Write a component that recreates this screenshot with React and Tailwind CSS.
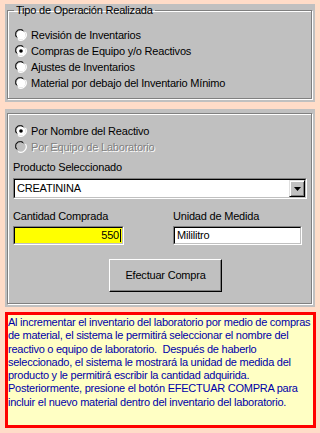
import React from 'react';

const lines = [
    'Al incrementar el inventario del laboratorio por medio de compras',
    'de material, el sistema le permitirá seleccionar el nombre del',
    'reactivo o equipo de laboratorio.\u00a0 Después de haberlo',
    'seleccionado, el sistema le mostrará la unidad de medida del',
    'producto y le permitirá escribir la cantidad adquirida.',
    'Posteriormente, presione el botón EFECTUAR COMPRA para',
    'incluir el nuevo material dentro del inventario del laboratorio.',
];

const Radio = ({ checked, disabled }) => (
    <svg width="12" height="12" viewBox="0 0 12 12" className="shrink-0">
        <path d="M1 8 A5 5 0 0 1 8 1" fill="none" stroke="#808080" strokeWidth="1" />
        <circle cx="6" cy="6" r="4.5" fill={disabled ? '#c0c0c0' : '#fff'} />
        <path d="M2 8.5 A4 4 0 0 1 8.5 2" fill="none" stroke="#000" strokeWidth="1" />
        <path d="M3 10.5 A5.5 5.5 0 0 0 10.5 3" fill="none" stroke="#fff" strokeWidth="1.2" />
        {checked && <circle cx="6" cy="6" r="1.8" fill="#000" />}
    </svg>
);

const RadioRow = ({ label, checked, disabled }) => (
    <div className="h-[16px] flex items-center gap-[4px] pl-[7px]">
        <Radio checked={checked} disabled={disabled} />
        <span
            className={disabled ? 'text-[#808080] [text-shadow:1px_1px_0_#fff]' : 'text-black'}
        >
            {label}
        </span>
    </div>
);

const sunken = 'border border-t-[#808080] border-l-[#808080] border-r-white border-b-white';
const sunkenInner = 'border border-t-black border-l-black border-r-[#c0c0c0] border-b-[#c0c0c0]';
const etched = 'border border-[#808080] shadow-[inset_1px_1px_0_#fff,1px_1px_0_#fff]';

const App = () => {
    return (
        <div className="w-[320px] h-[433px] bg-[#FFDCC8] px-[5px] pt-[4px] font-['Liberation_Sans',Arial,sans-serif] text-[11px] leading-[13px] tracking-[-0.2px] text-black overflow-hidden">
            <div className="bg-[#c0c0c0] h-[98px] pr-[3px] pl-[2px]">
                <fieldset className={`${etched} h-[95px] min-w-0`}>
                    <legend className="ml-[6px] px-[2px] leading-[13px]">Tipo de Operación Realizada</legend>
                    <div className="pt-[10px]">
                        <RadioRow label="Revisión de Inventarios" />
                        <RadioRow label="Compras de Equipo y/o Reactivos" checked />
                        <RadioRow label="Ajustes de Inventarios" />
                        <RadioRow label="Material por debajo del Inventario Mínimo" />
                    </div>
                </fieldset>
            </div>

            <div className="bg-[#c0c0c0] h-[198px] mt-[7px] pt-[4px] pr-[3px] pl-[2px]">
                <div className={`${etched} h-[191px] pt-[9px]`}>
                    <RadioRow label="Por Nombre del Reactivo" checked />
                    <RadioRow label="Por Equipo de Laboratorio" disabled />

                    <div className="ml-[5px] mt-[6px]">Producto Seleccionado</div>
                    <div className={`${sunken} ml-[5px] mr-[4px] mt-[4px] h-[21px]`}>
                        <div className={`${sunkenInner} h-full bg-white flex items-center justify-between`}>
                            <span className="pl-[2px]">CREATININA</span>
                            <div className="w-[16px] h-[17px] bg-[#c0c0c0] border border-t-[#dfdfdf] border-l-[#dfdfdf] border-r-black border-b-black shadow-[inset_1px_1px_0_#fff,inset_-1px_-1px_0_#808080] flex items-center justify-center">
                                <svg width="7" height="4" viewBox="0 0 7 4">
                                    <path d="M0 0 H7 L3.5 4 Z" fill="#000" />
                                </svg>
                            </div>
                        </div>
                    </div>

                    <div className="flex mt-[11px]">
                        <div className="ml-[5px] w-[111px]">
                            <div>Cantidad Comprada</div>
                            <div className={`${sunken} mt-[3px] h-[19px]`}>
                                <div className={`${sunkenInner} h-full bg-[#ffff00] flex items-center justify-end pr-[1px]`}>
                                    <span>550</span>
                                    <span className="w-px h-[13px] bg-black ml-px" />
                                </div>
                            </div>
                        </div>
                        <div className="ml-[49px] w-[129px]">
                            <div>Unidad de Medida</div>
                            <div className={`${sunken} mt-[3px] h-[19px]`}>
                                <div className={`${sunkenInner} h-full bg-white flex items-center pl-[2px]`}>
                                    Mililitro
                                </div>
                            </div>
                        </div>
                    </div>

                    <div className="flex mt-[14px] pl-[101px]">
                        <button className="w-[113px] h-[33px] bg-[#c0c0c0] border border-t-white border-l-white border-r-black border-b-black shadow-[inset_-1px_-1px_0_#808080] text-[11px] tracking-[-0.2px]">
                            Efectuar Compra
                        </button>
                    </div>
                </div>
            </div>

            <div className="mt-[5px] h-[116px] w-[311px] border-[3px] border-[#ff0000] bg-[#FFFFC4] text-[#0000A8] pt-[1px] leading-[13.3px] tracking-[-0.25px]">
                {lines.map((l) => (
                    <div key={l} className="whitespace-nowrap">{l}</div>
                ))}
            </div>
        </div>
    );
};

export default App;
